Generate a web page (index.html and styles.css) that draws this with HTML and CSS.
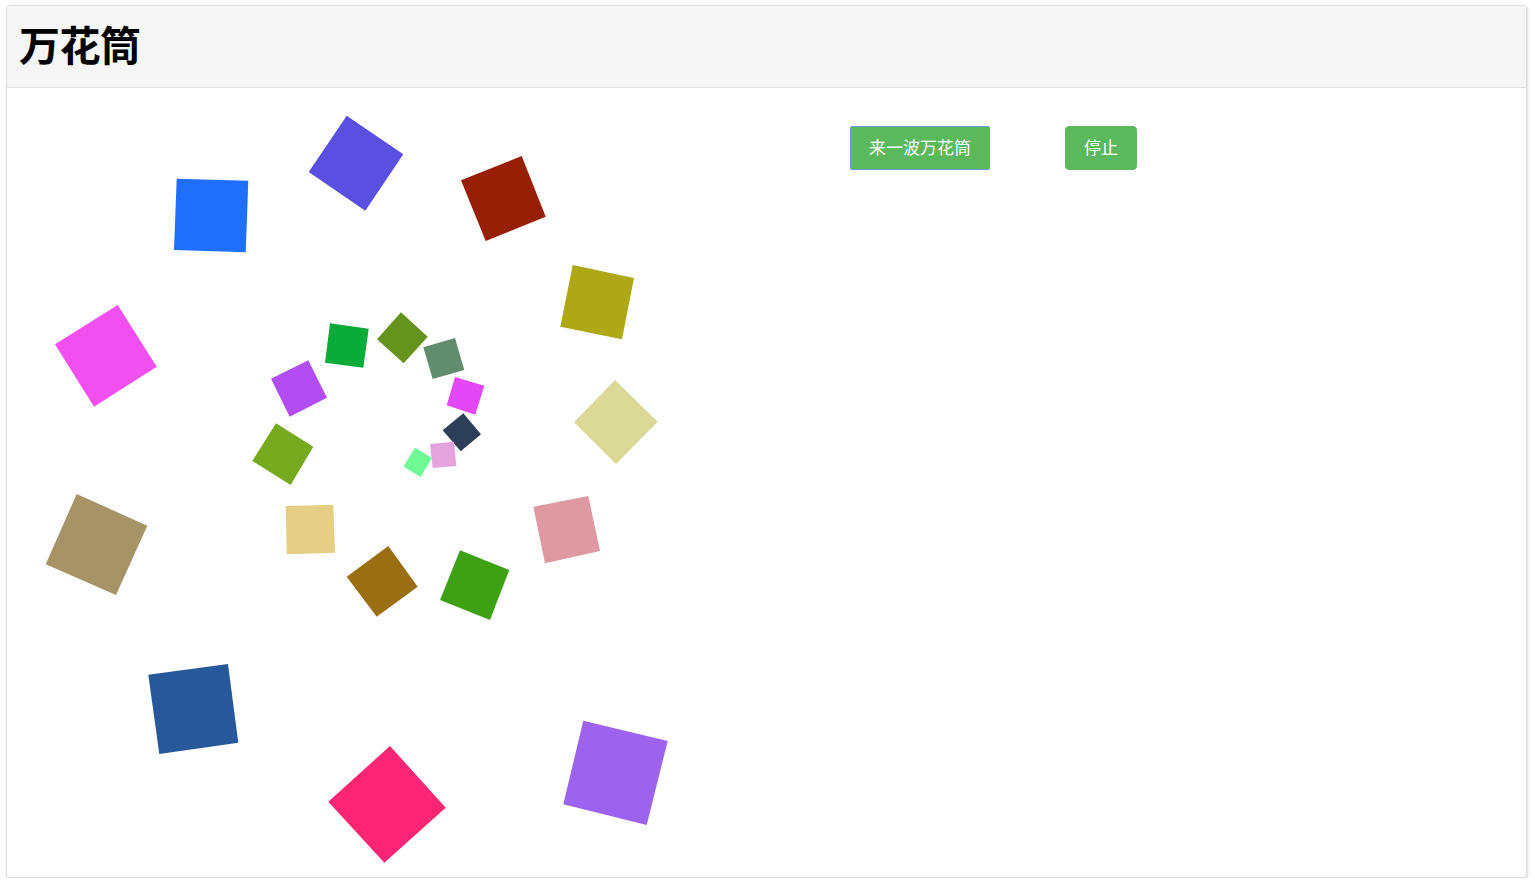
FILE: index.html
```html
<!DOCTYPE html>
<html lang="zh-CN">
<head>
<meta charset="utf-8">
<title>万花筒</title>
<link rel="stylesheet" href="styles.css">
</head>
<body>
<div class="panel">
  <div class="panel-heading">
    <h1 class="title">万花筒</h1>
  </div>
  <div class="panel-body">
    <svg class="stage" width="836" height="788" viewBox="7 88 836 788" xmlns="http://www.w3.org/2000/svg">
      <polygon fill="#1f6ffc" points="176.7,178.7 248.3,180.7 245.7,252.3 174,250"/>
      <polygon fill="#f24ff0" points="117.7,305 156.7,366.7 94,406.7 55,344.3"/>
      <polygon fill="#5a4fe0" points="346.7,115.7 403.3,154.3 365.3,210.7 308.7,172"/>
      <polygon fill="#961f06" points="521.7,156 545.7,216.7 485.7,241 461,180.3"/>
      <polygon fill="#aea817" points="572.7,265 634,278 622,339.3 560.3,326.7"/>
      <polygon fill="#dbd998" points="615,380 657.7,421.7 616,464 574,422.3"/>
      <polygon fill="#0bab39" points="330,323.3 368.7,328.7 363.3,367.7 325,362.7"/>
      <polygon fill="#66931e" points="401,312.3 427.7,336.7 403.7,363.3 377,339.3"/>
      <polygon fill="#628c6e" points="455,338 464.3,370 432.7,379 423.3,347.3"/>
      <polygon fill="#e348f6" points="455,377 484.3,385.7 475.3,414.7 446.7,405.3"/>
      <polygon fill="#2d3e59" points="463.3,413.3 481,434.3 460.7,451.3 442.7,430.3"/>
      <polygon fill="#e4a3dd" points="454,441.7 456.3,466 432.7,468 430,444"/>
      <polygon fill="#6ffa96" points="415,447.5 432,458 420.5,477 403.5,466.5"/>
      <polygon fill="#b14df3" points="308.3,360.3 327,397.7 289.7,416.7 271,378.7"/>
      <polygon fill="#77aa1f" points="276,423.3 313.3,446.7 290.7,485 252.3,461"/>
      <polygon fill="#e5cf85" points="285.7,506 333.3,504.7 335,552.7 286.7,554.3"/>
      <polygon fill="#a79368" points="76.7,494 147.3,525.7 116,595 45.7,564.3"/>
      <polygon fill="#275899" points="148.3,674.7 228,664 238.3,742.7 159.3,754"/>
      <polygon fill="#9a6f13" points="388.3,546 417.7,586.7 376.7,616.7 346.7,576.7"/>
      <polygon fill="#3ea114" points="460,550.3 509.3,570 490,620 440,600"/>
      <polygon fill="#df99a3" points="588.3,496 600,551 545,563.3 533.3,506.7"/>
      <polygon fill="#fd2574" points="390,746 445.7,807.7 384.3,862.7 328.3,801.7"/>
      <polygon fill="#9d63ee" points="583.3,720.7 667.7,741 646.7,825 563.3,804.3"/>
    </svg>
    <div class="controls">
      <button class="btn btn-success is-focused" type="button">来一波万花筒</button>
      <button class="btn btn-success" type="button">停止</button>
    </div>
  </div>
</div>
</body>
</html>
```
FILE: styles.css
```css
* { box-sizing: border-box; }
html, body { margin: 0; padding: 0; background: #fff; }
body {
  padding: 5px 8px 0 6px;
  font-family: "Noto Sans CJK SC", "Noto Sans", sans-serif;
  color: #333;
}
.panel {
  height: 873px;
  border: 1px solid #dddddd;
  border-radius: 4px;
  background: #fff;
  box-shadow: 1px 1px 3px rgba(0,0,0,0.14);
  display: flex;
  flex-direction: column;
  overflow: hidden;
}
.panel-heading {
  height: 82px;
  background: #f6f6f6;
  border-bottom: 1px solid #e2e2e2;
  display: flex;
  align-items: center;
  padding: 0 0 6px 12px;
}
.title {
  margin: 0;
  font-size: 41px;
  font-weight: 700;
  color: #000;
  line-height: 1;
  letter-spacing: -0.5px;
}
.panel-body {
  flex: 1;
  display: flex;
  align-items: flex-start;
}
.stage { display: block; flex: none; }
.controls {
  display: flex;
  gap: 75px;
  margin-top: 38px;
  margin-left: 7px;
}
.btn {
  height: 44px;
  padding: 0 18px 3px;
  font-family: "Noto Sans CJK SC", "Noto Sans", sans-serif;
  font-size: 17px;
  line-height: 1;
  color: #fff;
  background: #5cb85c;
  border: 1px solid #5cb85c;
  border-radius: 4px;
  cursor: pointer;
}
.btn.is-focused {
  border-color: #6c9fd8;
  border-radius: 2px;
}
```
